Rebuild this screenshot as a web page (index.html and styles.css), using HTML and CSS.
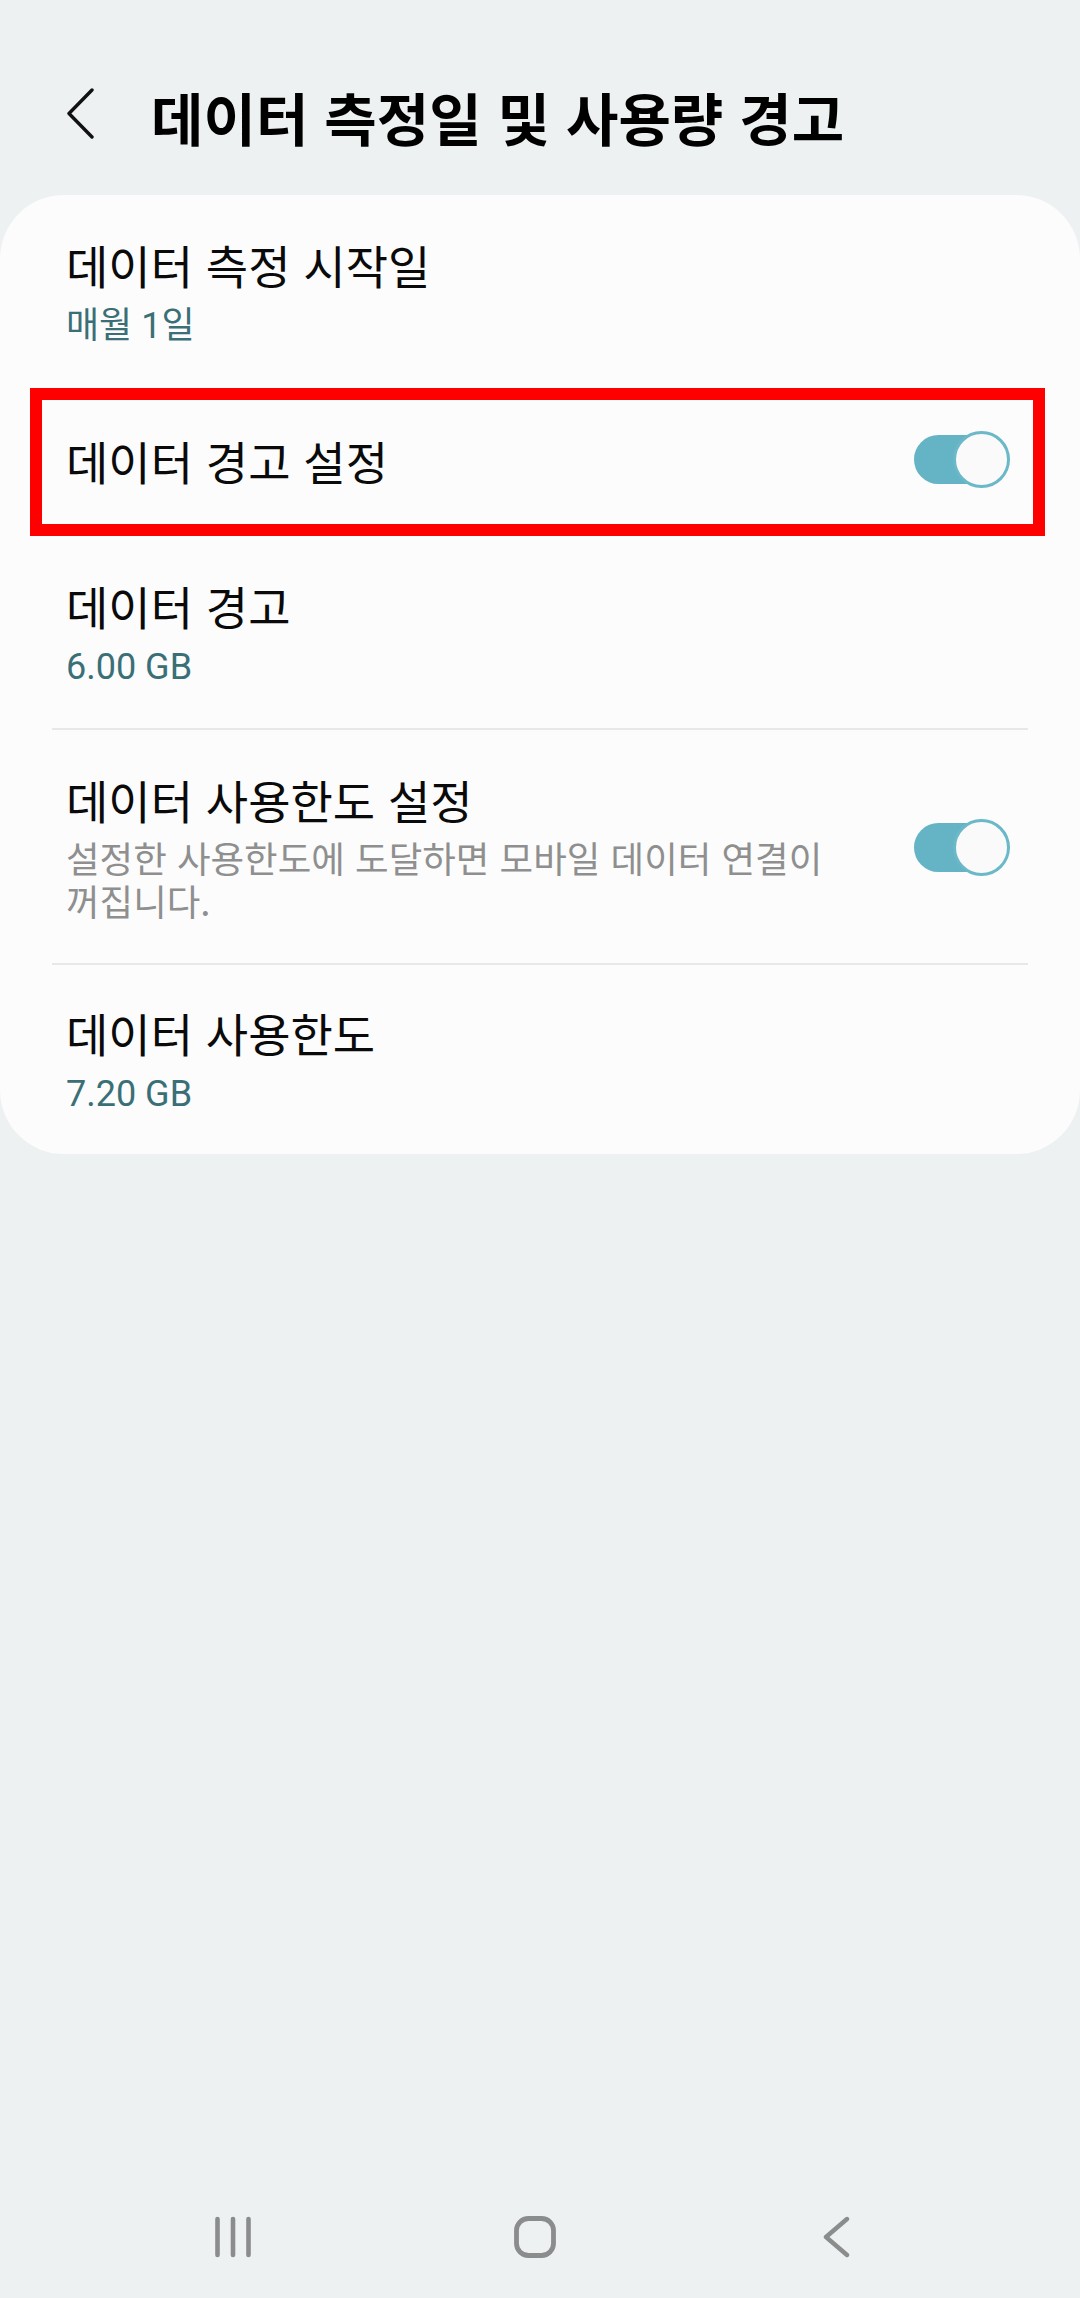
FILE: index.html
```html
<!DOCTYPE html>
<html lang="ko">
<head>
<meta charset="utf-8">
<title>데이터 측정일 및 사용량 경고</title>
<link rel="stylesheet" href="styles.css">
</head>
<body>
<div class="screen">
  <main class="main">
    <header class="appbar">
      <svg class="back" width="30" height="52" viewBox="0 0 30 52" aria-hidden="true">
        <path d="M26 3 L3 26.5 L26 50" fill="none" stroke="#111" stroke-width="3.4" stroke-linecap="round" stroke-linejoin="round"/>
      </svg>
      <h1 class="appbar-title">데이터 측정일 및 사용량 경고</h1>
    </header>

    <section class="card">
      <div class="row row-first">
        <div class="text">
          <div class="title">데이터 측정 시작일</div>
          <div class="sub accent">매월 1일</div>
        </div>
      </div>

      <div class="row row-single">
        <div class="text">
          <div class="title">데이터 경고 설정</div>
        </div>
        <div class="switch">
          <span class="track"></span>
          <span class="thumb"></span>
        </div>
        <div class="highlight"></div>
      </div>

      <div class="row">
        <div class="text">
          <div class="title">데이터 경고</div>
          <div class="sub accent">6.00 GB</div>
        </div>
      </div>
      <div class="divider"></div>

      <div class="row row-mid">
        <div class="text">
          <div class="title">데이터 사용한도 설정</div>
          <div class="sub muted">설정한 사용한도에 도달하면 모바일 데이터 연결이 꺼집니다.</div>
        </div>
        <div class="switch">
          <span class="track"></span>
          <span class="thumb"></span>
        </div>
      </div>
      <div class="divider"></div>

      <div class="row row-last">
        <div class="text">
          <div class="title">데이터 사용한도</div>
          <div class="sub accent">7.20 GB</div>
        </div>
      </div>
    </section>
  </main>

  <nav class="navbar">
    <div class="nav-cell">
      <svg width="40" height="42" viewBox="0 0 40 42" aria-hidden="true">
        <g stroke="#8b8c8c" stroke-width="4.6" stroke-linecap="round">
          <line x1="4.5" y1="3" x2="4.5" y2="39"/>
          <line x1="20" y1="3" x2="20" y2="39"/>
          <line x1="35.5" y1="3" x2="35.5" y2="39"/>
        </g>
      </svg>
    </div>
    <div class="nav-cell">
      <svg width="46" height="46" viewBox="0 0 46 46" aria-hidden="true">
        <rect x="4.5" y="4.5" width="37" height="37" rx="12" ry="12" fill="none" stroke="#8b8c8c" stroke-width="4.8"/>
      </svg>
    </div>
    <div class="nav-cell">
      <svg width="30" height="42" viewBox="0 0 30 42" aria-hidden="true">
        <path d="M25 3 L4 21 L25 39" fill="none" stroke="#8b8c8c" stroke-width="4.4" stroke-linecap="round" stroke-linejoin="round"/>
      </svg>
    </div>
  </nav>
</div>
</body>
</html>
```

FILE: styles.css
```css
html, body {
  margin: 0;
  padding: 0;
}

body {
  background: #eef1f2;
  font-family: Roboto, "Noto Sans CJK KR", "Noto Sans", sans-serif;
  color: #0d0d0d;
}

.screen {
  width: 1080px;
  height: 2298px;
  display: flex;
  flex-direction: column;
  overflow: hidden;
}

.main {
  flex: 1;
  display: flex;
  flex-direction: column;
}

/* ---------- App bar ---------- */
.appbar {
  height: 195px;
  box-sizing: border-box;
  padding: 86px 0 0 66px;
  display: flex;
  align-items: flex-start;
}

.back {
  display: block;
  margin-top: 1px;
  flex: none;
}

.appbar-title {
  margin: 0 0 0 55px;
  font-family: "Noto Sans CJK KR", sans-serif;
  font-weight: 700;
  font-size: 57px;
  line-height: 60px;
  color: #000;
  white-space: nowrap;
}

/* ---------- Card ---------- */
.card {
  background: #fcfcfc;
  border-radius: 64px;
  display: flex;
  flex-direction: column;
}

.row {
  position: relative;
  display: flex;
  align-items: center;
  padding: 43px 70px 39px 66px;
}

.row-first {
  padding-bottom: 40px;
}

.row-single {
  padding-top: 43px;
  padding-bottom: 48px;
}

.row-mid {
  padding-bottom: 41px;
}

.row-last {
  padding-top: 41px;
  padding-bottom: 38px;
}

.text {
  flex: 1;
  min-width: 0;
}

.title {
  font-family: "Noto Sans CJK KR", sans-serif;
  font-size: 46px;
  line-height: 52px;
  color: #0a0a0a;
}

.sub {
  margin-top: 15px;
  font-size: 36px;
  line-height: 43px;
}

.accent {
  color: #3b6f77;
}

.muted {
  margin-top: 11px;
  font-family: "Noto Sans CJK KR", sans-serif;
  font-size: 36.5px;
  color: #8f8f8f;
  padding-right: 40px;
  word-break: keep-all;
}

.divider {
  height: 2px;
  margin: 0 52px;
  background: #e7e8e9;
}

/* ---------- Switch ---------- */
.switch {
  position: relative;
  flex: none;
  width: 96px;
  height: 57px;
  margin-left: 12px;
}

.track {
  position: absolute;
  left: 0;
  top: 4px;
  width: 88px;
  height: 49px;
  border-radius: 25px;
  background: #64b4c5;
}

.thumb {
  position: absolute;
  right: 0;
  top: 0;
  width: 57px;
  height: 57px;
  box-sizing: border-box;
  border-radius: 50%;
  border: 3px solid #6ab8c8;
  background: #fafafa;
}

/* ---------- Annotation overlay ---------- */
.highlight {
  position: absolute;
  top: 0;
  bottom: 0;
  left: 30px;
  right: 35px;
  border: 12px solid #fe0000;
  pointer-events: none;
}

/* ---------- Navigation bar ---------- */
.navbar {
  height: 122px;
  flex: none;
  display: grid;
  grid-template-columns: repeat(3, 302px);
  padding: 0 0 0 82px;
  align-items: center;
  justify-items: center;
}

.nav-cell {
  display: flex;
  align-items: center;
  justify-content: center;
}

.nav-cell svg {
  display: block;
}
```
